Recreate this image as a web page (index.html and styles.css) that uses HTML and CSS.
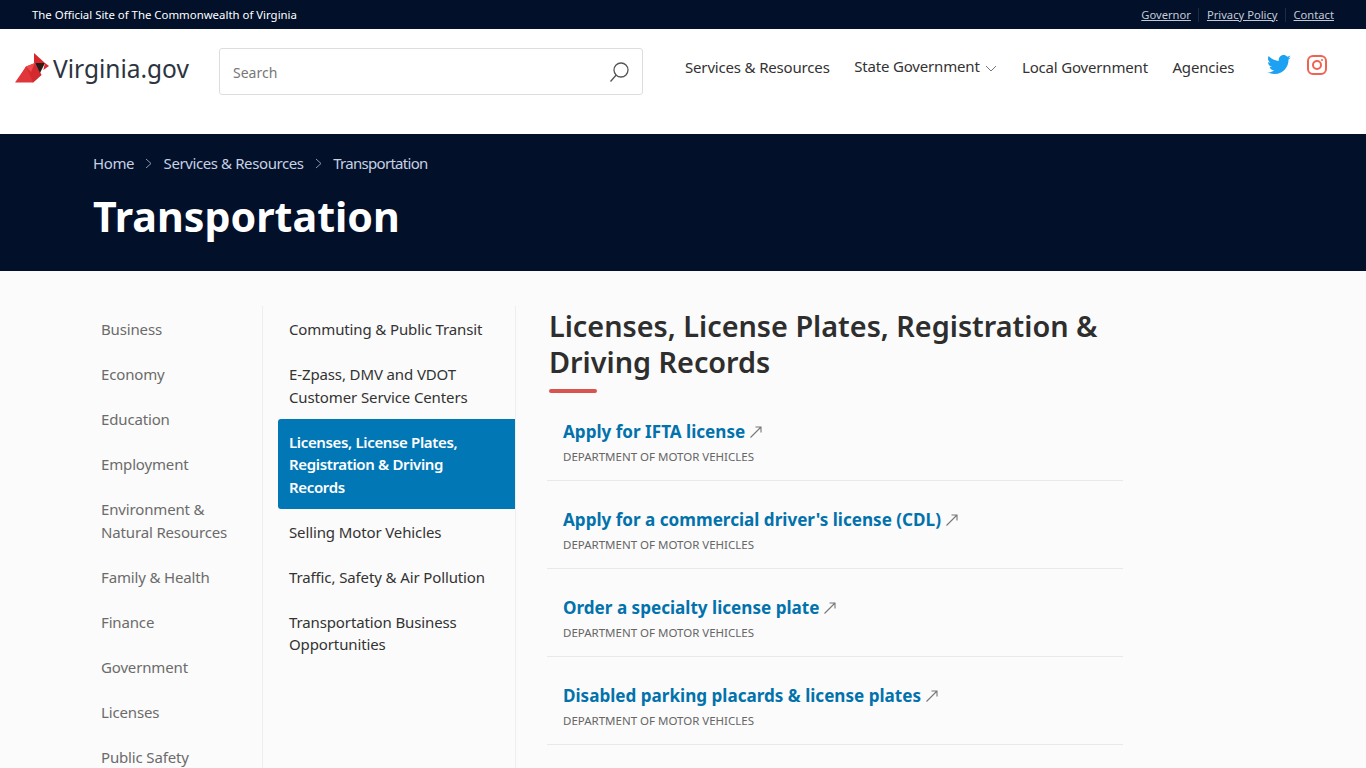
FILE: index.html
```html
<!DOCTYPE html>
<html lang="en">
<head>
<meta charset="utf-8">
<title>Transportation | Virginia.gov</title>
<link rel="stylesheet" href="styles.css">
</head>
<body>
<div class="topbar">
  <span class="official">The Official Site of The Commonwealth of Virginia</span>
  <ul class="toplinks">
    <li><a href="#">Governor</a></li>
    <li><a href="#">Privacy Policy</a></li>
    <li><a href="#">Contact</a></li>
  </ul>
</div>
<header class="header">
  <a class="logo" href="#">
    <svg class="bird" width="34" height="30" viewBox="0 0 34 30">
      <polygon points="19,0 19,10 30,10" fill="#d8262c"/>
      <polygon points="30,10 34,13 28.300,17" fill="#d8262c"/>
      <polygon points="11,13.600 20,10 26.600,22 18.300,29.600 5,24" fill="#d22a2f"/>
      <polygon points="20,10 30,10 25,20" fill="#2a1a18"/>
      <polygon points="0,29.600 11,13.600 18.300,29.600" fill="#e0353a"/>
      <polygon points="11,13.600 20,10 16,19" fill="#ee4a4a"/>
    </svg>
    <span class="logotext">Virginia.gov</span>
  </a>
  <form class="search">
    <span class="searchtext">Search</span>
    <svg class="searchicon" width="22" height="22" viewBox="0 0 22 22" fill="none" stroke="#555" stroke-width="1.3">
      <circle cx="13" cy="9" r="7"/>
      <path d="M8.200 14 2.500 20.500"/>
    </svg>
  </form>
  <nav class="nav">
    <a href="#">Services &amp; Resources</a>
    <a href="#" class="raised">State Government
      <svg class="chev" width="12" height="7" viewBox="0 0 12 7" fill="none" stroke="#777"><path d="M1 1l5 5 5-5"/></svg>
    </a>
    <a href="#">Local Government</a>
    <a href="#">Agencies</a>
  </nav>
  <div class="social">
    <svg width="24" height="20" viewBox="0 0 24 20"><path fill="#1da1f2" d="M24 2.400c-.9.400-1.800.700-2.800.800 1-.6 1.800-1.600 2.200-2.700-1 .600-2 1-3.100 1.200C19.300.700 18 0 16.600 0c-2.700 0-4.900 2.200-4.900 4.900 0 .400 0 .800.100 1.100C7.700 5.800 4.100 3.900 1.700.900c-.4.700-.7 1.600-.7 2.500 0 1.700.900 3.200 2.200 4.100-.8 0-1.600-.2-2.200-.6v.100c0 2.400 1.700 4.400 3.900 4.800-.4.100-.8.200-1.300.2-.3 0-.6 0-.9-.1.600 2 2.400 3.400 4.600 3.400-1.700 1.300-3.800 2.100-6.100 2.100-.4 0-.8 0-1.200-.1C2.200 18.200 4.800 19 7.500 19c9.100 0 14-7.500 14-14v-.6c1-.7 1.800-1.500 2.500-2z"/></svg>
    <svg width="20" height="20" viewBox="0 0 20 20" fill="none" stroke="#ee6352" stroke-width="2"><rect x="1" y="1" width="18" height="18" rx="5"/><circle cx="10" cy="10" r="4"/><circle cx="15" cy="5" r=".6" fill="#ee6352" stroke-width="1"/></svg>
  </div>
</header>
<section class="hero">
  <ol class="crumbs">
    <li><a href="#">Home</a></li>
    <li class="sep"><svg width="7" height="11" viewBox="0 0 7 11" fill="none" stroke="#8b97ad"><path d="M1 1l5 4.500-5 4.500"/></svg></li>
    <li><a href="#">Services &amp; Resources</a></li>
    <li class="sep"><svg width="7" height="11" viewBox="0 0 7 11" fill="none" stroke="#8b97ad"><path d="M1 1l5 4.500-5 4.500"/></svg></li>
    <li class="current"><a href="#">Transportation</a></li>
  </ol>
  <h1>Transportation</h1>
</section>
<main class="main">
  <ul class="col1">
    <li>Business</li>
    <li>Economy</li>
    <li>Education</li>
    <li>Employment</li>
    <li>Environment &amp; Natural Resources</li>
    <li>Family &amp; Health</li>
    <li>Finance</li>
    <li>Government</li>
    <li>Licenses</li>
    <li>Public Safety</li>
  </ul>
  <ul class="col2">
    <li>Commuting &amp; Public Transit</li>
    <li>E-Zpass, DMV and VDOT Customer Service Centers</li>
    <li class="active">Licenses, License Plates, Registration &amp; Driving Records</li>
    <li>Selling Motor Vehicles</li>
    <li>Traffic, Safety &amp; Air Pollution</li>
    <li>Transportation Business Opportunities</li>
  </ul>
  <section class="content">
    <h2>Licenses, License Plates, Registration &amp; Driving Records</h2>
    <div class="rule"></div>
    <article class="item">
      <h3><a href="#">Apply for IFTA license</a><svg class="arrow" width="12" height="12" viewBox="0 0 12 12" fill="none" stroke="#777" stroke-width="1.100"><path d="M.5 11.500 11 1M5.500 1H11v5.500"/></svg></h3>
      <p>DEPARTMENT OF MOTOR VEHICLES</p>
    </article>
    <article class="item">
      <h3><a href="#">Apply for a commercial driver's license (CDL)</a><svg class="arrow" width="12" height="12" viewBox="0 0 12 12" fill="none" stroke="#777" stroke-width="1.100"><path d="M.5 11.500 11 1M5.500 1H11v5.500"/></svg></h3>
      <p>DEPARTMENT OF MOTOR VEHICLES</p>
    </article>
    <article class="item">
      <h3><a href="#">Order a specialty license plate</a><svg class="arrow" width="12" height="12" viewBox="0 0 12 12" fill="none" stroke="#777" stroke-width="1.100"><path d="M.5 11.500 11 1M5.500 1H11v5.500"/></svg></h3>
      <p>DEPARTMENT OF MOTOR VEHICLES</p>
    </article>
    <article class="item">
      <h3><a href="#">Disabled parking placards &amp; license plates</a><svg class="arrow" width="12" height="12" viewBox="0 0 12 12" fill="none" stroke="#777" stroke-width="1.100"><path d="M.5 11.500 11 1M5.500 1H11v5.500"/></svg></h3>
      <p>DEPARTMENT OF MOTOR VEHICLES</p>
    </article>
  </section>
</main>
</body>
</html>
```
FILE: styles.css
```css
* { box-sizing: border-box; }
html, body { margin: 0; height: 768px; overflow: hidden; }
body { font-family: "Noto Sans", "Open Sans", sans-serif; background: #fff; color: #333; }
a { color: inherit; text-decoration: none; }
ul, ol { list-style: none; margin: 0; padding: 0; }

.topbar { height: 29px; background: #021029; color: #fff; display: flex; justify-content: space-between; align-items: center; padding: 0 32px; font-size: 11.4px; }
.toplinks { display: flex; font-size: 11.2px; }
.toplinks li { padding: 0 7.5px; border-left: 1px solid #1d2b44; line-height: 14px; }
.toplinks li:first-child { border-left: 0; }
.toplinks li:last-child { padding-right: 0; }
.toplinks a { color: #c3cbd8; text-decoration: underline; }

.header { height: 105px; display: flex; align-items: flex-start; background: #fff; }
.logo { display: flex; align-items: center; margin: 24px 0 0 15px; width: 204px; }
.bird { margin-top: -2px; }
.logotext { font-size: 24.5px; line-height: 32px; color: #2c3440; margin-left: 4px; }
.search { width: 424px; height: 47px; margin-top: 19px; border: 1px solid #ddd; border-radius: 3px; display: flex; align-items: center; justify-content: space-between; padding: 0 12px 0 13px; }
.searchtext { font-size: 14px; color: #777; margin-top: 2px; }
.nav { display: flex; gap: 24.5px; margin: 27px 0 0 42px; font-size: 15px; line-height: 22px; color: #333; letter-spacing: -0.17px; }
.raised { position: relative; top: -1px; }
.chev { margin-left: 2px; }
.social { display: flex; gap: 16px; margin: 26px 0 0 33px; align-items: flex-start; }

.hero { height: 137px; background: #021029; padding: 17px 93px 0; }
.crumbs { display: flex; align-items: center; gap: 11.25px; font-size: 15px; line-height: 24px; color: #c6d1e4; letter-spacing: -0.4px; }
.current { letter-spacing: -0.7px; }
.sep { display: flex; }
h1 { margin: 14px 0 0; font-size: 41.2px; line-height: 54px; font-weight: 700; color: #fff; }

.main { height: 497px; background: #fbfbfb; display: flex; padding: 35px 0 0 93px; align-items: stretch; }
.col1 { width: 170px; border-right: 1px solid #eee; padding-right: 22px; font-size: 15px; line-height: 22.5px; color: #6b6b6b; letter-spacing: -0.15px; }
.col1 li { padding: 12.25px 8px 10.25px; }
.col2 { width: 253px; border-right: 1px solid #eee; padding-left: 15px; font-size: 15px; line-height: 22.5px; color: #333; letter-spacing: -0.12px; }
.col2 li { padding: 12.25px 11px 10.25px; }
.col2 .active { background: #0277b6; color: #fff; font-weight: 600; border-radius: 3px 0 0 3px; letter-spacing: -0.35px; padding-right: 45px; }

.content { width: 576px; margin-left: 31px; }
h2 { margin: 0 0 0 2px; font-size: 28.8px; line-height: 36px; font-weight: 600; color: #2e2e2e; padding-top: 2px; }
.rule { width: 48px; height: 4px; background: #d9534f; border-radius: 2px; margin: 9px 0 0 2px; }
.item { border-bottom: 1px solid #e8e8e8; padding: 26px 16px 0; height: 88px; }
.item p { margin: 4px 0 0; font-size: 11.5px; line-height: 16px; color: #666; }
h3 { margin: 0; font-size: 17.1px; line-height: 26px; font-weight: 700; display: flex; align-items: center; }
h3 a { color: #0272ac; }
.arrow { margin-left: 5px; }
```
